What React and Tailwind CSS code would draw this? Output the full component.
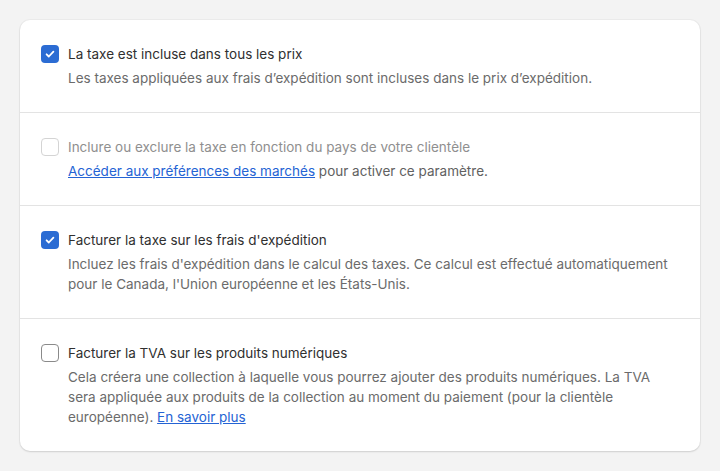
import React from 'react';

const Check = ({ checked, disabled }) => {
    if (checked) {
        return (
            <span className="flex-shrink-0 w-[18px] h-[18px] rounded-[4px] bg-[#2b6cd3] flex items-center justify-center mt-[1px]">
                <svg className="w-[12px] h-[12px]" viewBox="0 0 12 12" fill="none">
                    <path d="M2.6 6.3l2.2 2.2 4.6-4.9" stroke="white" strokeWidth="1.8" strokeLinecap="round" strokeLinejoin="round" />
                </svg>
            </span>
        );
    }
    return (
        <span
            className={`flex-shrink-0 w-[18px] h-[18px] rounded-[4px] bg-white border-[1.5px] mt-[1px] ${disabled ? 'border-[#d4d4d4]' : 'border-[#8a8a8a]'}`}
        />
    );
};

const options = [
    {
        id: 'included',
        checked: true,
        title: 'La taxe est incluse dans tous les prix',
        body: <>Les taxes appliquées aux frais d’expédition sont incluses dans le prix d’expédition.</>,
    },
    {
        id: 'by-country',
        disabled: true,
        title: 'Inclure ou exclure la taxe en fonction du pays de votre clientèle',
        body: (
            <>
                <a className="text-[#2463d4] underline underline-offset-1">Accéder aux préférences des marchés</a>{' '}
                <span className="text-[#616161]">pour activer ce paramètre.</span>
            </>
        ),
    },
    {
        id: 'shipping',
        checked: true,
        title: "Facturer la taxe sur les frais d'expédition",
        body: <>Incluez les frais d'expédition dans le calcul des taxes. Ce calcul est effectué automatiquement pour le Canada, l'Union européenne et les États-Unis.</>,
    },
    {
        id: 'digital',
        title: 'Facturer la TVA sur les produits numériques',
        body: (
            <>
                Cela créera une collection à laquelle vous pourrez ajouter des produits numériques. La TVA sera appliquée aux produits de la collection au moment du paiement (pour la clientèle européenne).{' '}
                <a className="text-[#2463d4] underline underline-offset-1">En savoir plus</a>
            </>
        ),
    },
];

export default function App() {
    return (
        <div className="min-h-[471px] bg-[#f3f3f3] pt-5 px-5 pb-5 font-['Inter','Liberation_Sans',sans-serif]">
            <div className="bg-white rounded-[10px] shadow-[0_1px_2px_rgba(0,0,0,0.12),0_0_0_1px_rgba(0,0,0,0.03)]">
                {options.map((opt, i) => (
                    <div key={opt.id} className={`flex gap-[9px] pl-[21px] pr-4 py-6 ${i > 0 ? 'border-t border-[#e3e3e3]' : ''}`}>
                        <Check checked={opt.checked} disabled={opt.disabled} />
                        <div className="flex-1 min-w-0">
                            <div className={`text-[13.5px] leading-5 ${opt.disabled ? 'text-[#8f8f8f]' : 'text-[#303030]'}`}>{opt.title}</div>
                            <div className="mt-1 text-[13.5px] leading-5 text-[#6b6b6b] pr-2">{opt.body}</div>
                        </div>
                    </div>
                ))}
            </div>
        </div>
    );
}
